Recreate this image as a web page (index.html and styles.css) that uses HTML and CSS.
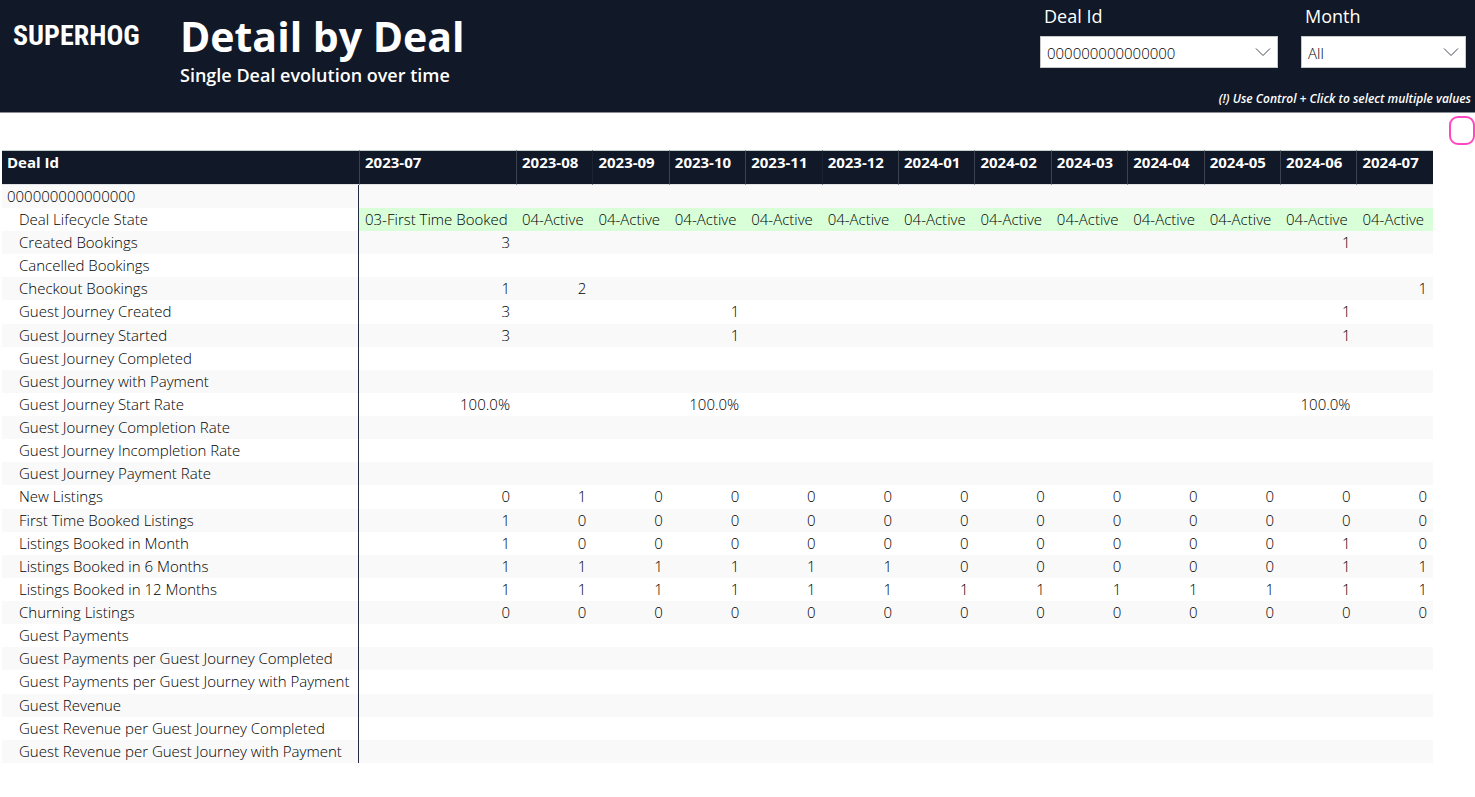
FILE: index.html
```html
<!DOCTYPE html>
<html lang="en">
<head>
<meta charset="utf-8">
<title>Detail by Deal</title>
<link rel="stylesheet" href="styles.css">
</head>
<body>
<header class="banner">
  <div class="logo">SUPERHOG</div>
  <div class="heading">
    <h1 class="title">Detail by Deal</h1>
    <p class="subtitle">Single Deal evolution over time</p>
  </div>
  <div class="controls">
    <div class="slicers">
      <div class="slicer slicer-deal">
        <label class="slicer-label" for="deal">Deal Id</label>
        <div class="picker">
          <select id="deal" class="picker-select"><option>000000000000000</option></select>
          <svg class="chevron" viewBox="0 0 16 10" aria-hidden="true"><path d="M1 1.500L8 8.500L15 1.500"/></svg>
        </div>
      </div>
      <div class="slicer slicer-month">
        <label class="slicer-label" for="month">Month</label>
        <div class="picker">
          <select id="month" class="picker-select"><option>All</option></select>
          <svg class="chevron" viewBox="0 0 16 10" aria-hidden="true"><path d="M1 1.500L8 8.500L15 1.500"/></svg>
        </div>
      </div>
    </div>
    <p class="hint">(!) Use Control + Click to select multiple values</p>
  </div>
</header>
<main class="report">
  <div class="toolbar"><button class="marker" type="button" aria-label="Toggle"></button></div>
  <table class="matrix">
    <colgroup><col class="col-name"><col class="col-first"><col span="12"></colgroup>
    <thead><tr id="months"></tr></thead>
    <tbody id="rows"></tbody>
  </table>
</main>
<script src="matrix.js"></script>
</body>
</html>
```
FILE: matrix.js
```js
const months = ["2023-07", "2023-08", "2023-09", "2023-10", "2023-11", "2023-12", "2024-01",
  "2024-02", "2024-03", "2024-04", "2024-05", "2024-06", "2024-07"];

// Values are comma separated, one per month; an empty slot is a blank cell.
const metrics = [
  ["Created Bookings", "3,,,,,,,,,,,1,"],
  ["Cancelled Bookings", ""],
  ["Checkout Bookings", "1,2,,,,,,,,,,,1"],
  ["Guest Journey Created", "3,,,1,,,,,,,,1,"],
  ["Guest Journey Started", "3,,,1,,,,,,,,1,"],
  ["Guest Journey Completed", ""],
  ["Guest Journey with Payment", ""],
  ["Guest Journey Start Rate", "100.0%,,,100.0%,,,,,,,,100.0%,"],
  ["Guest Journey Completion Rate", ""],
  ["Guest Journey Incompletion Rate", ""],
  ["Guest Journey Payment Rate", ""],
  ["New Listings", "0,1,0,0,0,0,0,0,0,0,0,0,0"],
  ["First Time Booked Listings", "1,0,0,0,0,0,0,0,0,0,0,0,0"],
  ["Listings Booked in Month", "1,0,0,0,0,0,0,0,0,0,0,1,0"],
  ["Listings Booked in 6 Months", "1,1,1,1,1,1,0,0,0,0,0,1,1"],
  ["Listings Booked in 12 Months", "1,1,1,1,1,1,1,1,1,1,1,1,1"],
  ["Churning Listings", "0,0,0,0,0,0,0,0,0,0,0,0,0"],
  ["Guest Payments", ""],
  ["Guest Payments per Guest Journey Completed", ""],
  ["Guest Payments per Guest Journey with Payment", ""],
  ["Guest Revenue", ""],
  ["Guest Revenue per Guest Journey Completed", ""],
  ["Guest Revenue per Guest Journey with Payment", ""]
];

const head = document.getElementById("months");
const body = document.getElementById("rows");

["Deal Id", ...months].forEach(text => {
  const th = document.createElement("th");
  th.scope = "col";
  th.textContent = text;
  head.append(th);
});

function addRow(name, values, nameClass, cellClass) {
  const tr = body.insertRow();
  const th = document.createElement("th");
  th.scope = "row";
  th.className = nameClass;
  th.textContent = name;
  tr.append(th);
  months.forEach((m, i) => {
    const td = tr.insertCell();
    td.className = cellClass;
    td.textContent = values[i] || "";
  });
}

addRow("000000000000000", [], "group", "value");
addRow("Deal Lifecycle State", months.map((m, i) => i ? "04-Active" : "03-First Time Booked"), "metric", "state");
metrics.forEach(([name, values]) => addRow(name, values.split(","), "metric", "value"));
```
FILE: styles.css
```css
* { box-sizing: border-box; }

body {
  margin: 0;
  background: #fff;
  color: #000;
  font-family: "Open Sans", "Noto Sans", sans-serif;
  font-size: 15px;
  font-weight: 340;
}

h1, p { margin: 0; }

.banner {
  display: flex;
  align-items: flex-start;
  padding: 0 4px 0 13px;
  background: #111827;
  border-bottom: 1px solid #8a8c96;
  color: #fff;
}

.logo {
  width: 167px;
  padding-top: 12px;
  font-family: "Roboto Condensed", "Liberation Sans Narrow", "Liberation Sans", sans-serif;
  font-size: 28px;
  font-weight: 700;
  line-height: 48px;
}

.heading { padding-top: 10px; }

.title {
  font-size: 41px;
  font-weight: 700;
  line-height: 53px;
}

.subtitle {
  font-size: 18px;
  font-weight: 650;
  line-height: 25px;
}

.controls {
  flex: 1;
  padding-top: 3px;
}

.slicers {
  display: flex;
  justify-content: flex-end;
  gap: 23px;
  padding-right: 5px;
}

.slicer-deal { width: 238px; }
.slicer-month { width: 165px; }

.slicer-label {
  display: block;
  padding-left: 4px;
  font-size: 18px;
  font-weight: 400;
  line-height: 26px;
}

.picker {
  position: relative;
  margin-top: 7px;
}

.picker-select {
  display: block;
  width: 100%;
  height: 32px;
  padding: 2px 6px 0;
  appearance: none;
  background: #fff;
  border: 1px solid #c8c8c8;
  border-radius: 0;
  color: #000;
  font: inherit;
}

.chevron {
  position: absolute;
  top: 11px;
  right: 7px;
  width: 16px;
  height: 10px;
  fill: none;
  stroke: #4a4a52;
  pointer-events: none;
}

.hint {
  padding: 21px 0 3px;
  font-size: 12px;
  font-style: italic;
  font-weight: 600;
  line-height: 20px;
  text-align: right;
}

.toolbar {
  display: flex;
  justify-content: flex-end;
  height: 37px;
  padding-top: 3px;
}

.marker {
  width: 26px;
  height: 29px;
  padding: 0;
  background: #fff;
  border: 2px solid #ff47c2;
  border-radius: 9px;
}

.matrix {
  width: calc(100% - 44px);
  margin-left: 2px;
  table-layout: fixed;
  border-collapse: separate;
  border-spacing: 0;
  white-space: nowrap;
}

.col-name { width: 357px; }
.col-first { width: 157px; }

.matrix th, .matrix td {
  height: 23px;
  padding: 0 5px;
  line-height: 23px;
  text-align: left;
  vertical-align: top;
}

.matrix thead th {
  height: 35px;
  background: #111827;
  border-top: 1px solid #c5cfcb;
  border-bottom: 1px solid #dfe3e6;
  border-left: 1px solid #3b4250;
  color: #fff;
  font-weight: 700;
}

.matrix thead th:first-child { border-left: 0; }

.matrix thead th:nth-child(4),
.matrix thead th:nth-child(7) { border-left-color: #1c2331; }

.matrix tbody th {
  border-right: 1px solid #252b42;
  font-weight: 340;
}

.matrix tbody tr:nth-child(odd) { background: #f9f9f9; }
.matrix tbody tr:nth-child(8n+6) th { height: 24px; }
.matrix tbody .metric { padding: 0 0 0 17px; }
.matrix tbody .state { padding: 0 6px; background: #d9ffd9; }
.matrix tbody .value { padding-right: 6px; text-align: right; }
```
